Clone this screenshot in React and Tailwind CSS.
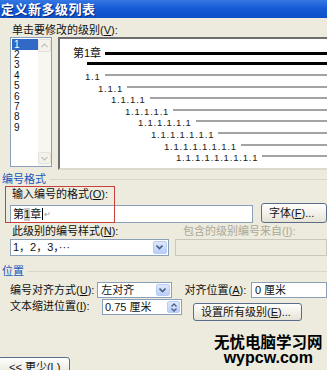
import React from 'react';

const LEVELS = [
  { text: '1.1', pl: 'pl-[25px]' },
  { text: '1.1.1', pl: 'pl-[38px]' },
  { text: '1.1.1.1', pl: 'pl-[51px]' },
  { text: '1.1.1.1.1', pl: 'pl-[65px]' },
  { text: '1.1.1.1.1.1', pl: 'pl-[78px]' },
  { text: '1.1.1.1.1.1.1', pl: 'pl-[91px]' },
  { text: '1.1.1.1.1.1.1.1', pl: 'pl-[104px]' },
  { text: '1.1.1.1.1.1.1.1.1', pl: 'pl-[116px]' },
];

function Acc({ k }) {
  return (
    <>
      (<span className="underline underline-offset-1">{k}</span>)
    </>
  );
}

function DropButton() {
  return (
    <div className="w-[14px] h-full flex items-center justify-center rounded-[2px] border border-[#b9cdf4] bg-gradient-to-b from-[#dfe9fd] to-[#b8cdf8]">
      <svg width="7" height="5" viewBox="0 0 7 5">
        <path d="M0.5 0.5 L3.5 3.5 L6.5 0.5" fill="none" stroke="#4d6185" strokeWidth="1.6" />
      </svg>
    </div>
  );
}

function XpButton({ children, className }) {
  return (
    <div className={`flex items-center rounded-[3px] border border-[#5a6e8c] bg-gradient-to-b from-[#ffffff] to-[#e6e3d6] ${className}`}>
      {children}
    </div>
  );
}

export default function App() {
  return (
    <div className="relative w-[327px] h-[370px] overflow-hidden bg-[#ecebdd] text-[11px] leading-[13px] text-[#111] font-['Liberation_Sans','Noto_Sans_CJK_SC',sans-serif]">
      {/* title bar */}
      <div className="h-[18px] flex items-center bg-gradient-to-b from-[#3577e3] via-[#1459d6] to-[#0c4fc8] pl-[1px]">
        <span className="text-white font-bold text-[13px] tracking-[0.5px] [text-shadow:1px_1px_0_#0a2d7a]">定义新多级列表</span>
      </div>

      <div className="mt-[6px] pl-[12px]">
        单击要修改的级别<Acc k="V" />:
      </div>

      {/* level list + preview */}
      <div className="flex h-[133px] pl-[10px] gap-[6px]">
        <div className="w-[42px] h-[130px] border border-[#8aa0b8] bg-white flex">
          <div className="flex-1 pt-[1px] pl-[1px] text-[10px]">
            {[1, 2, 3, 4, 5, 6, 7, 8, 9].map((n) => (
              <div
                key={n}
                className={`h-[10.4px] leading-[10.4px] pl-[2px] ${n === 1 ? 'bg-[#3169c6] text-white h-[11px] leading-[11px]' : ''}`}
              >
                {n}
              </div>
            ))}
          </div>
          <div className="w-[13px] bg-[#f7f6f1] flex flex-col justify-between">
            <div className="h-[13px] mt-[1px] border border-[#e4e2d8] rounded-[2px] bg-[#f3f2ec] flex items-center justify-center">
              <svg width="7" height="5" viewBox="0 0 7 5">
                <path d="M0.5 4 L3.5 1 L6.5 4" fill="none" stroke="#c8c6ba" strokeWidth="1.4" />
              </svg>
            </div>
            <div className="h-[12px] mb-[2px] border border-[#e4e2d8] rounded-[2px] bg-[#f3f2ec] flex items-center justify-center">
              <svg width="7" height="5" viewBox="0 0 7 5">
                <path d="M0.5 1 L3.5 4 L6.5 1" fill="none" stroke="#c8c6ba" strokeWidth="1.4" />
              </svg>
            </div>
          </div>
        </div>

        <div className="flex-1 -mr-[20px] h-[133px] border-2 border-[#6e6e6e] border-b-[#dcdacd] bg-white">
          <div className="flex items-center pl-[13px] mt-[8px] h-[12px]">
            <span className="text-[11px]">第1章</span>
            <div className="flex-1 h-[3px] ml-[4px] bg-black" />
          </div>
          <div className="ml-[27px] mt-[3px] h-[3px] bg-black" />
          <div className="mt-[6px]">
            {LEVELS.map((l) => (
              <div key={l.text} className={`flex items-start h-[11.6px] ${l.pl}`}>
                <span className="text-[9.5px] leading-[11.6px] tracking-[0.8px] text-[#222]">{l.text}</span>
                <div className="flex-1 h-[2px] mt-[3px] ml-[4px] bg-[#a3a3a3]" />
              </div>
            ))}
          </div>
        </div>
      </div>

      {/* number format */}
      <div className="flex items-center mt-[3px] pl-[2px]">
        <span className="text-[#2257bd]">编号格式</span>
        <div className="flex-1 h-px ml-[4px] bg-[#d8d6c6]" />
      </div>
      <div className="mt-[2px] pl-[12px]">
        输入编号的格式<Acc k="O" />:
      </div>
      <div className="flex items-end mt-[2px] h-[20px] pl-[10px]">
        <div className="w-[260px] h-[18px] border border-[#8aa0b8] bg-white flex items-center pl-[2px] text-[11px]">
          第<span className="bg-[#c9c9c9]">1</span>章
          <span className="w-px h-[12px] bg-black ml-[1px]" />
          <span className="text-[8px] text-[#999] ml-[1px]">↵</span>
        </div>
        <XpButton className="ml-[8px] h-[20px] w-[70px] pl-[7px]">
          字体<Acc k="F" />...
        </XpButton>
      </div>

      <div className="flex mt-[2px]">
        <div className="pl-[12px] w-[183px]">
          此级别的编号样式<Acc k="N" />:
        </div>
        <div className="text-[#aca899]">
          包含的级别编号来自<Acc k="I" />:
        </div>
      </div>
      <div className="flex mt-[1px] h-[17px] pl-[10px]">
        <div className="w-[167px] h-[17px] border border-[#8aa0b8] bg-white flex items-center pl-[2px] pr-[1px] py-[1px]">
          <span className="flex-1">1，2，3，···</span>
          <DropButton />
        </div>
        <div className="ml-[6px] w-[160px] h-[17px] border border-[#c9c7ba] bg-[#ecebdd]" />
      </div>

      {/* position */}
      <div className="flex items-center mt-[9px] pl-[2px]">
        <span className="text-[#2257bd]">位置</span>
        <div className="flex-1 h-px ml-[4px] bg-[#d8d6c6]" />
      </div>
      <div className="flex items-center mt-[4px] h-[16px] pl-[10px]">
        <div className="w-[92px]">
          编号对齐方式<Acc k="U" />:
        </div>
        <div className="w-[78px] h-[16px] border border-[#8aa0b8] bg-white flex items-center pl-[3px] pr-[1px] py-[1px]">
          <span className="flex-1">左对齐</span>
          <DropButton />
        </div>
        <div className="ml-[13px] w-[70px]">
          对齐位置<Acc k="A" />:
        </div>
        <div className="w-[80px] h-[16px] border border-[#8aa0b8] bg-white flex items-center pl-[3px]">
          0 厘米
        </div>
      </div>
      <div className="flex items-start mt-[1px] h-[21px] pl-[10px]">
        <div className="w-[92px] mt-[1px]">
          文本缩进位置<Acc k="I" />:
        </div>
        <div className="w-[80px] h-[16px] border border-[#8aa0b8] bg-white flex items-center pl-[2px] pr-[1px] py-[1px]">
          <span className="flex-1">0.75 厘米</span>
          <div className="w-[13px] h-full flex flex-col items-center justify-center gap-[1px] rounded-[2px] border border-[#b9cdf4] bg-gradient-to-b from-[#dfe9fd] to-[#b8cdf8]">
            <svg width="6" height="4" viewBox="0 0 6 4">
              <path d="M0.5 3.5 L3 1 L5.5 3.5" fill="none" stroke="#4d6185" strokeWidth="1.3" />
            </svg>
            <svg width="6" height="4" viewBox="0 0 6 4">
              <path d="M0.5 0.5 L3 3 L5.5 0.5" fill="none" stroke="#4d6185" strokeWidth="1.3" />
            </svg>
          </div>
        </div>
        <XpButton className="ml-[11px] mt-[4px] h-[18px] w-[109px] pl-[7px]">
          设置所有级别<Acc k="E" />...
        </XpButton>
      </div>

      <XpButton className="mt-[37px] -ml-[2px] h-[20px] w-[72px] pl-[10px]">
        &lt;&lt; 更少<Acc k="L" />
      </XpButton>

      {/* watermark */}
      <div className="absolute left-[214px] top-[332px] flex flex-col items-center font-bold text-black">
        <span className="text-[15.5px] leading-[18px] font-['Noto_Sans_CJK_SC',sans-serif]">无忧电脑学习网</span>
        <span className="text-[16px] leading-[15px] font-['Liberation_Sans',sans-serif]">wypcw.com</span>
      </div>

      {/* red annotation box */}
      <div className="absolute left-[5px] top-[186px] w-[110px] h-[37px] border border-[#c8403c]" />
    </div>
  );
}
